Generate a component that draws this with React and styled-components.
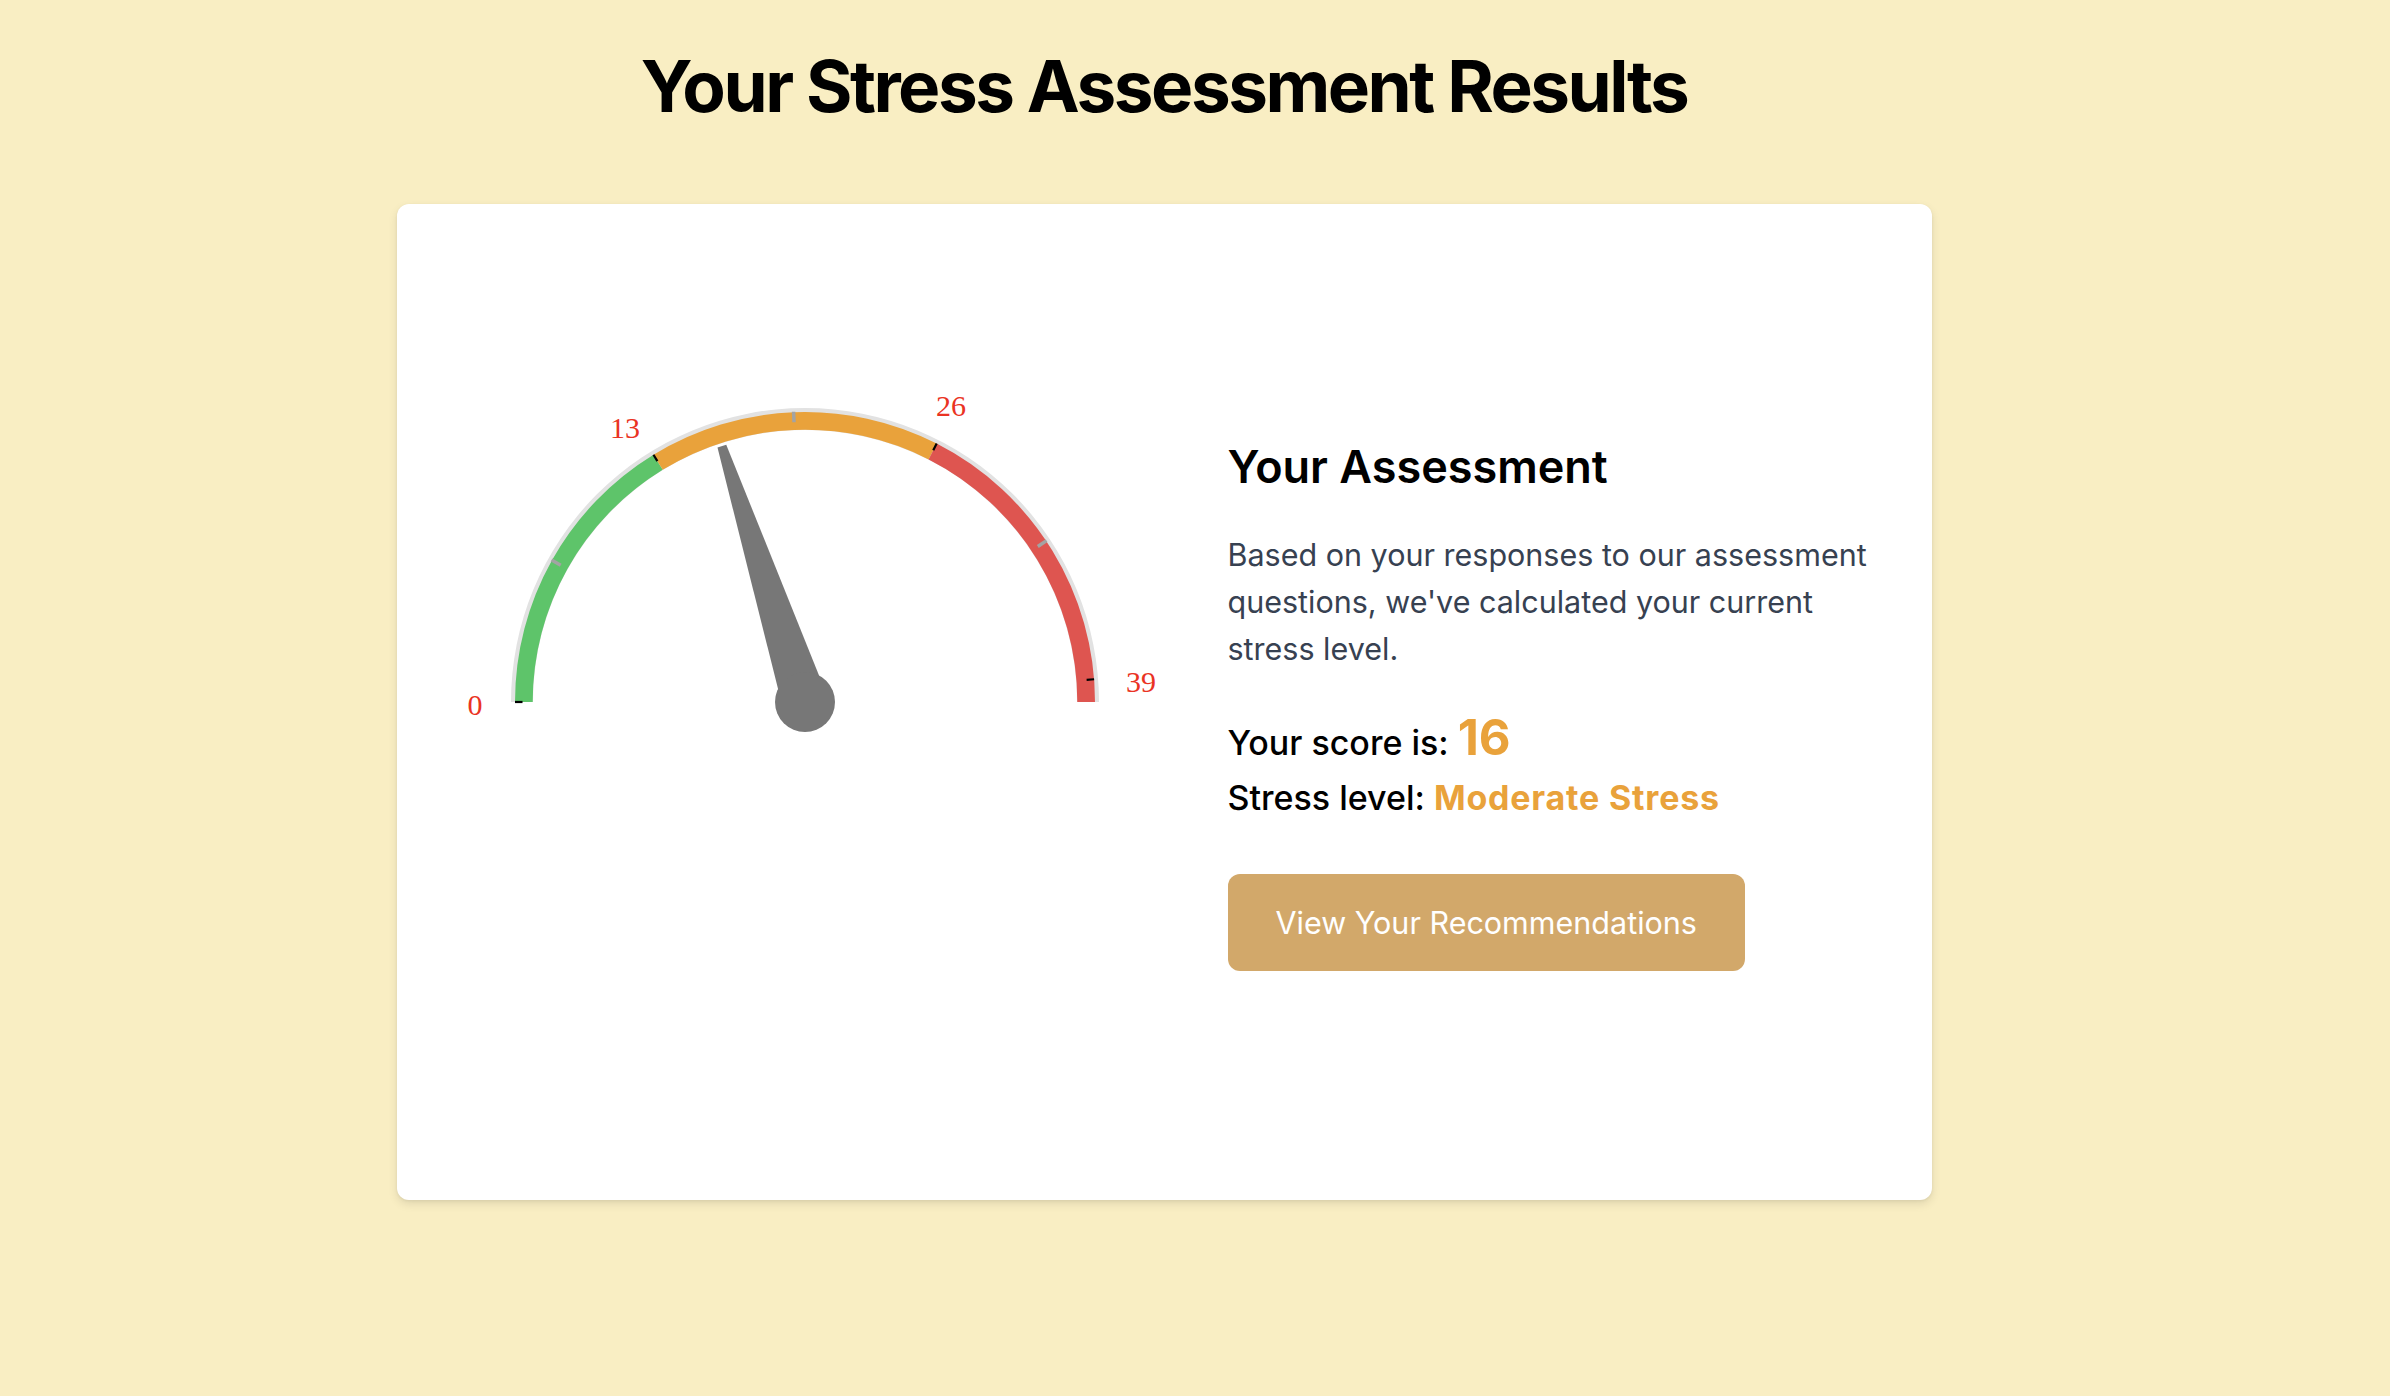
import React from "react";
import styled, { createGlobalStyle } from "styled-components";

const GlobalStyle = createGlobalStyle`
  html, body {
    margin: 0;
    padding: 0;
    background: #f9eec3;
  }
  body {
    font-family: Inter, "Noto Sans", "Liberation Sans", sans-serif;
  }
  * { box-sizing: border-box; }
`;

const Page = styled.main`
  min-height: 1396px;
  padding: 43px 62px 0 0;
  display: flex;
  flex-direction: column;
  align-items: center;
  background: #f9eec3;
`;

const Title = styled.h1`
  margin: 0;
  font-size: 71px;
  line-height: 86px;
  font-weight: 700;
  letter-spacing: -0.035em;
  color: #000;
`;

const Card = styled.section`
  margin-top: 75px;
  width: 1535px;
  height: 996px;
  background: #fff;
  border-radius: 12px;
  box-shadow: 0 4px 10px rgba(0, 0, 0, 0.1), 0 1px 3px rgba(0, 0, 0, 0.06);
  display: flex;
  align-items: center;
  padding: 0 48px 0 38px;
  gap: 53px;
`;

const GaugeColumn = styled.div`
  flex: 0 0 740px;
  display: flex;
  justify-content: center;
`;

const Info = styled.div`
  flex: 1;
  padding-top: 7px;
  display: flex;
  flex-direction: column;
  align-items: flex-start;
`;

const Heading = styled.h2`
  margin: 0;
  font-size: 45px;
  line-height: 53px;
  font-weight: 600;
  color: #000;
`;

const Description = styled.p`
  margin: 38px 0 0;
  font-size: 30.5px;
  line-height: 47px;
  color: #374151;
`;

const Scores = styled.div`
  margin-top: 38px;
  display: flex;
  flex-direction: column;
`;

const ScoreLine = styled.div`
  font-size: 34px;
  line-height: 55px;
  font-weight: 500;
  color: #000;
`;

const Highlight = styled.span`
  color: #e9a23b;
  font-weight: 700;
  font-size: ${(p) => (p.$big ? "49px" : "inherit")};
  letter-spacing: ${(p) => (p.$big ? "0" : "0.024em")};
`;

const ActionButton = styled.button`
  margin-top: 49px;
  padding: 26px 48px;
  border: none;
  border-radius: 12px;
  background: #d2a86a;
  color: #fff;
  font-family: inherit;
  font-size: 30.5px;
  line-height: 45px;
  font-weight: 400;
  cursor: pointer;
`;

const LabelText = styled.text`
  font-family: "Liberation Serif", "Times New Roman", serif;
  font-size: 30px;
  fill: #ea3323;
`;

const W = 740;
const H = 660;
const CX = 370;
const CY = 330;

const rad = (d) => (d * Math.PI) / 180;
const pt = (r, deg) => [CX + r * Math.cos(rad(deg)), CY - r * Math.sin(rad(deg))];

function arcPath(a1, a2, r1, r2) {
  const [ox1, oy1] = pt(r2, a1);
  const [ox2, oy2] = pt(r2, a2);
  const [ix2, iy2] = pt(r1, a2);
  const [ix1, iy1] = pt(r1, a1);
  return `M ${ox1} ${oy1} A ${r2} ${r2} 0 0 1 ${ox2} ${oy2} L ${ix2} ${iy2} A ${r1} ${r1} 0 0 0 ${ix1} ${iy1} Z`;
}

const valToDeg = (v) => 180 - v * 4.5;

const segments = [
  { from: 180, to: valToDeg(13), color: "#5ec46a" },
  { from: valToDeg(13), to: valToDeg(26), color: "#e9a23b" },
  { from: valToDeg(26), to: 0, color: "#de5550" },
];

const majors = [0, 13, 26, 39];
const minors = [6.5, 19.5, 32.5];

const labels = [
  { v: 0, dx: -330, dy: 2 },
  { v: 13, dx: -180, dy: -274.7 },
  { v: 26, dx: 146, dy: -296.7 },
  { v: 39, dx: 336, dy: -20.7 },
];

function Gauge({ value }) {
  const needleDeg = valToDeg(value);
  const u = [Math.cos(rad(needleDeg)), -Math.sin(rad(needleDeg))];
  const p = [-u[1], u[0]];
  const tipR = 269;
  const baseHalf = 23;
  const tipHalf = 4.6;
  const needle = [
    [CX + p[0] * baseHalf, CY + p[1] * baseHalf],
    [CX + u[0] * tipR + p[0] * tipHalf, CY + u[1] * tipR + p[1] * tipHalf],
    [CX + u[0] * tipR - p[0] * tipHalf, CY + u[1] * tipR - p[1] * tipHalf],
    [CX - p[0] * baseHalf, CY - p[1] * baseHalf],
  ]
    .map((q) => q.join(","))
    .join(" ");

  return (
    <svg width={W} height={H} viewBox={`0 0 ${W} ${H}`}>
      <path d={arcPath(180, 0, 272, 294)} fill="#e2e2e2" />
      {segments.map((s) => (
        <path key={s.color} d={arcPath(s.from, s.to, 272.3, 290)} fill={s.color} />
      ))}
      {minors.map((v) => {
        const d = valToDeg(v);
        const [x1, y1] = pt(280, d);
        const [x2, y2] = pt(290.5, d);
        return <line key={v} x1={x1} y1={y1} x2={x2} y2={y2} stroke="#a3a3a3" strokeWidth="3.5" />;
      })}
      {majors.map((v) => {
        const d = valToDeg(v);
        const [x1, y1] = pt(282.5, d);
        const [x2, y2] = pt(290, d);
        return <line key={v} x1={x1} y1={y1} x2={x2} y2={y2} stroke="#000" strokeWidth="2.2" />;
      })}
      {labels.map((l) => (
        <LabelText key={l.v} x={CX + l.dx} y={CY + l.dy + 10.5} textAnchor="middle">
          {l.v}
        </LabelText>
      ))}
      <polygon points={needle} fill="#777777" />
      <circle cx={CX} cy={CY} r="30" fill="#777777" />
    </svg>
  );
}

export default function App() {
  const score = 16;
  return (
    <>
      <GlobalStyle />
      <Page>
        <Title>Your Stress Assessment Results</Title>
        <Card>
          <GaugeColumn>
            <Gauge value={score} />
          </GaugeColumn>
          <Info>
            <Heading>Your Assessment</Heading>
            <Description>
              Based on your responses to our assessment questions, we've calculated your current
              stress level.
            </Description>
            <Scores>
              <ScoreLine>
                Your score is: <Highlight $big>{score}</Highlight>
              </ScoreLine>
              <ScoreLine>
                Stress level: <Highlight>Moderate Stress</Highlight>
              </ScoreLine>
            </Scores>
            <ActionButton type="button">View Your Recommendations</ActionButton>
          </Info>
        </Card>
      </Page>
    </>
  );
}
